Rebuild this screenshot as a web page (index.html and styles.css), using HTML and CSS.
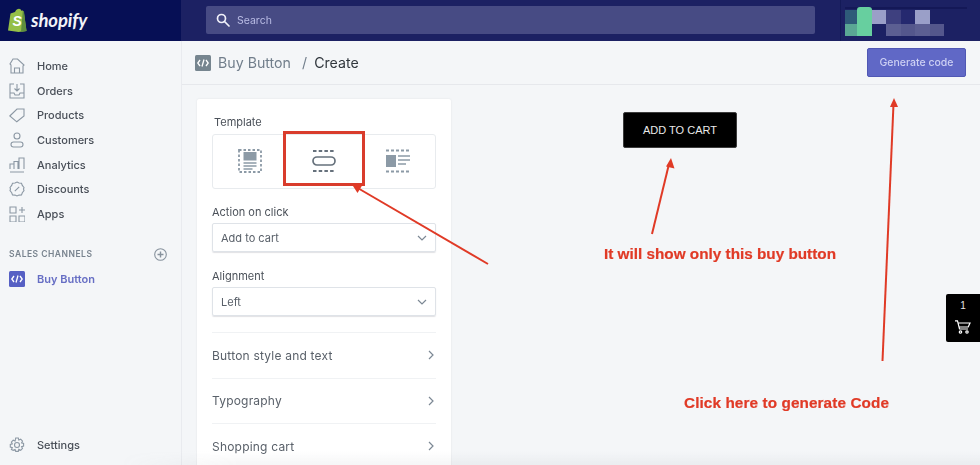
FILE: index.html
```html
<!DOCTYPE html>
<html lang="en">
<head>
    <meta charset="UTF-8">
    <title>Buy Button - Create</title>
    <link rel="stylesheet" href="styles.css">
</head>
<body>
<div class="page">
    <header class="topbar">
        <div class="brand">
            <svg class="bag" width="20" height="24" viewBox="0 0 20 24">
                <path d="M2.500 5.500 7 4C8 1.500 9.500.8 11 .8c1.200 0 2 .9 2.400 1.900l1.400-.3 1 1.500 2.700 19-8 1.100L0 22.600z" fill="#95bf47"/>
                <path d="M14.800 2.400 16 3.800l2.500 19.300-5.500 1z" fill="#5e8e3e"/>
                <text x="4.500" y="18" class="bag-s">S</text>
            </svg>
            <span class="wordmark">shopify</span>
        </div>
        <div class="topbar-mid">
            <div class="search">
                <svg width="14" height="14" viewBox="0 0 14 14" fill="none" stroke="#f0f1fa" stroke-width="1.700">
                    <circle cx="5.500" cy="5.500" r="4"/>
                    <path d="m8.500 8.500 4.500 4.500" stroke-linecap="round"/>
                </svg>
                <span>Search</span>
            </div>
        </div>
        <div class="account">
            <div class="account-line"></div>
            <div class="pixels">
                <i class="px-a"></i><i class="px-g px-tab"></i><i class="px-b"></i><i class="px-c"></i><i class="px-d"></i><i class="px-b"></i><i></i>
                <i class="px-e"></i><i class="px-g"></i><i></i><i class="px-f"></i><i class="px-h"></i><i class="px-f"></i><i class="px-h"></i>
            </div>
        </div>
    </header>

    <div class="body-row">
        <nav class="sidebar">
            <a class="nav-item">
                <svg viewBox="0 0 16 16"><path d="M2 15V7L1 6l3-5h4.500L15 7l-1 1v7zM5.500 15v-5h5v5"/></svg>
                <span>Home</span>
            </a>
            <a class="nav-item">
                <svg viewBox="0 0 16 16"><path d="M5 1H1v14h14V1h-4M1 10h4l1 2h4l1-2h4M8 1v7M5.500 5.500 8 8l2.500-2.500"/></svg>
                <span>Orders</span>
            </a>
            <a class="nav-item">
                <svg viewBox="0 0 16 16"><path d="M.8 9 8 2h7v7l-7.200 5.800zM12 5h.1"/></svg>
                <span>Products</span>
            </a>
            <a class="nav-item">
                <svg viewBox="0 0 16 16"><circle cx="8" cy="4" r="3"/><rect x="2" y="10" width="12" height="5" rx="2.500"/></svg>
                <span>Customers</span>
            </a>
            <a class="nav-item">
                <svg viewBox="0 0 16 16"><path d="M1 12V7h4v5M5 12V4.500h4V12M10 12V1h5v11M1 15h14"/></svg>
                <span>Analytics</span>
            </a>
            <a class="nav-item">
                <svg viewBox="0 0 16 16"><path d="M8 1l2 1 2.500.2.800 2.200L15 6.500 14.500 8l.5 1.700-1.700 2-.8 2.200-2.500.2L8 15l-2-.9-2.500-.2-.8-2.200L1 9.700 1.500 8 1 6.500l1.700-2.100.8-2.200L6 2zM5.800 10.200l4.400-4.400M6 6h.1M10 10h.1"/></svg>
                <span>Discounts</span>
            </a>
            <a class="nav-item">
                <svg viewBox="0 0 16 16"><path d="M1 1h6v6H1zM1 10h6v6H1zM10 10h6v6h-6zM13 1v6M10 4h6"/></svg>
                <span>Apps</span>
            </a>

            <div class="channels">
                <span>SALES CHANNELS</span>
                <svg width="13" height="13" viewBox="0 0 13 13" fill="none" stroke="#87929d" stroke-width="1.100">
                    <circle cx="6.500" cy="6.500" r="5.800"/>
                    <path d="M6.500 3.500v6M3.500 6.500h6" stroke-width="1.400"/>
                </svg>
            </div>
            <a class="nav-item nav-active">
                <svg class="code-tile" viewBox="0 0 16 16"><rect width="16" height="16" rx="1.500" fill="#5660c4" stroke="none"/><path d="M5 5 2.800 8 5 11M11 5l2.200 3-2.200 3M9 4.500 7 11.500"/></svg>
                <span>Buy Button</span>
            </a>
            <a class="nav-item nav-settings">
                <svg viewBox="0 0 16 16"><circle cx="8" cy="8" r="2.500"/><path d="m6.700 1h2.600l.5 2 1.900-.8 1.800 1.800-.9 1.800 2 .6v2.600l-2 .6.900 1.900-1.800 1.800-1.900-.9-.5 2H6.700l-.6-2-1.900.9L2.400 12.500l.9-1.900-2-.6V7.400l2-.6-.9-1.800L4.200 3.200l1.900.8z"/></svg>
                <span>Settings</span>
            </a>
        </nav>

        <main class="content">
            <div class="page-head">
                <svg class="code-tile head-tile" viewBox="0 0 16 16"><rect width="16" height="16" rx="1.500" fill="#76858f" stroke="none"/><path d="M5 5 2.800 8 5 11M11 5l2.200 3-2.200 3M9 4.500 7 11.500"/></svg>
                <span class="crumb">Buy Button</span>
                <span class="slash">/</span>
                <span class="crumb-current">Create</span>
                <button class="generate">Generate code</button>
            </div>

            <div class="workspace">
                <section class="card">
                    <div class="field-label template-label">Template</div>
                    <div class="templates">
                        <div class="tpl">
                            <svg width="24" height="24" viewBox="0 0 24 24">
                                <rect x="1" y="1" width="22" height="22" fill="none" stroke="#8c9aa6" stroke-width="1.800" stroke-dasharray="2.500 2"/>
                                <rect x="5.500" y="3" width="13" height="8.500" fill="#8c9aa6"/>
                                <path d="M5.500 14h13M5.500 17h13M5.500 20h9" stroke="#8c9aa6" stroke-width="1.400"/>
                            </svg>
                        </div>
                        <div class="tpl">
                            <svg width="24" height="24" viewBox="0 0 24 24" fill="none" stroke="#66717c">
                                <path d="M1 2h22M1 22h22" stroke-width="1.800" stroke-dasharray="3.500 2.200"/>
                                <rect x="1" y="8" width="22" height="8" rx="4" stroke-width="1.700"/>
                            </svg>
                        </div>
                        <div class="tpl">
                            <svg width="24" height="24" viewBox="0 0 24 24">
                                <path d="M0 1.500h24M0 22.500h24" stroke="#8c9aa6" stroke-width="1.800" stroke-dasharray="3 2"/>
                                <rect x="0" y="6" width="10" height="12" fill="#8c9aa6"/>
                                <path d="M12 7h12M12 11h12M12 15h8" stroke="#8c9aa6" stroke-width="1.500"/>
                            </svg>
                        </div>
                    </div>

                    <div class="field-label">Action on click</div>
                    <div class="select">
                        <span>Add to cart</span>
                        <svg class="chev" width="10" height="6" viewBox="0 0 10 6"><path d="m1 1 4 4 4-4"/></svg>
                    </div>

                    <div class="field-label">Alignment</div>
                    <div class="select">
                        <span>Left</span>
                        <svg class="chev" width="10" height="6" viewBox="0 0 10 6"><path d="m1 1 4 4 4-4"/></svg>
                    </div>

                    <div class="section-row section-first">
                        <span>Button style and text</span>
                        <svg class="chev" width="6" height="10" viewBox="0 0 6 10"><path d="m1 1 4 4-4 4"/></svg>
                    </div>
                    <div class="section-row">
                        <span>Typography</span>
                        <svg class="chev" width="6" height="10" viewBox="0 0 6 10"><path d="m1 1 4 4-4 4"/></svg>
                    </div>
                    <div class="section-row">
                        <span>Shopping cart</span>
                        <svg class="chev" width="6" height="10" viewBox="0 0 6 10"><path d="m1 1 4 4-4 4"/></svg>
                    </div>
                </section>

                <div class="preview">
                    <button class="add-to-cart">ADD TO CART</button>
                </div>
            </div>
        </main>
    </div>

    <!-- things lying over the page -->
    <div class="cart-tab">
        <span>1</span>
        <svg width="16" height="14" viewBox="0 0 16 14" fill="none" stroke="#fff" stroke-width="1.200">
            <path d="M0 .8h2.500L4.500 9h8.500M3 3h12l-1.800 4H4.200"/>
            <circle cx="5.500" cy="12" r="1.200"/>
            <circle cx="12" cy="12" r="1.200"/>
        </svg>
    </div>
    <div class="red-box"></div>
    <svg class="arrows" width="980" height="465" viewBox="0 0 980 465" fill="none" stroke="#e03a26" stroke-width="2">
        <path d="M488 264 356 187"/>
        <path d="m352 184.500 11-.5-5.500 9z" fill="#e03a26" stroke="none"/>
        <path d="M652 234 669 164"/>
        <path d="m671 158 3.500 10.500-8.500-2z" fill="#e03a26" stroke="none"/>
        <path d="M882.500 361 893.500 104"/>
        <path d="m894 98 4 9h-8z" fill="#e03a26" stroke="none"/>
    </svg>
    <div class="note note-one">It will show only this buy button</div>
    <div class="note note-two">Click here to generate Code</div>
    <div class="bottom-fade"></div>
</div>
</body>
</html>
```

FILE: styles.css
```css
* {
    box-sizing: border-box;
}

html, body {
    margin: 0;
    height: 465px;
    overflow: hidden;
}

body {
    background: #f4f6f8;
    font-family: Inter, "Noto Sans", sans-serif;
    color: #4a5059;
}

/* the reference is a soft video frame */
.page {
    position: relative;
    display: flex;
    flex-direction: column;
    height: 465px;
    overflow: hidden;
    filter: blur(0.4px);
}

/* top bar */
.topbar {
    display: flex;
    flex: none;
    height: 41px;
    background: #1c2163;
}

.brand {
    display: flex;
    align-items: center;
    gap: 3px;
    width: 181px;
    padding-left: 8px;
    background: #060f55;
}

.bag {
    margin-top: -2px;
}

.bag-s {
    font: italic 700 14px "Liberation Sans", sans-serif;
    fill: #fff;
}

.wordmark {
    font: italic 700 18.500px Lato, sans-serif;
    color: #f2f3f8;
    letter-spacing: -0.1px;
    margin-top: -1px;
}

.topbar-mid {
    width: 659px;
    padding: 6px 0 0 25px;
}

.search {
    display: flex;
    align-items: center;
    gap: 7px;
    width: 609px;
    height: 28px;
    padding-left: 10px;
    border-radius: 2px;
    background: #474b84;
    color: #b9bce4;
    font-size: 10.500px;
}

.account {
    flex: 1;
    padding: 7px 0 0 4px;
    border-left: 1px solid #141a58;
}

.account-line {
    width: 122px;
    height: 2px;
    background: #141857;
}

.pixels {
    display: grid;
    grid-template-columns: 12px repeat(6, 14.500px);
    grid-template-rows: 14px 12px;
    margin-top: 1px;
}

.px-a { background: #2e5b79; }
.px-b { background: #9a9fc8; }
.px-c { background: #3e407f; }
.px-d { background: #25296f; }
.px-e { background: #5aa794; }
.px-f { background: #5c5f92; }
.px-g { background: #67cf9f; }
.px-h { background: #54578c; }

.px-tab {
    position: relative;
}

.px-tab::before {
    content: "";
    position: absolute;
    left: 0;
    right: 0;
    top: -3px;
    height: 3px;
    border-radius: 7px 7px 0 0;
    background: #67cf9f;
}

/* sidebar */
.body-row {
    display: flex;
    flex: 1;
    min-height: 0;
}

.sidebar {
    display: flex;
    flex-direction: column;
    flex: none;
    width: 182px;
    padding-top: 13px;
    border-right: 1px solid #e9ebef;
}

.nav-item {
    display: flex;
    align-items: center;
    gap: 12px;
    height: 24.600px;
    padding-left: 9px;
    font-size: 11px;
    font-weight: 500;
    color: #494f58;
}

.nav-item svg {
    flex: none;
    width: 16px;
    height: 16px;
    fill: none;
    stroke: #8c98a4;
    stroke-width: 1.100;
}

.nav-item .code-tile,
.code-tile {
    stroke: #fff;
    stroke-width: 1.300;
    fill: none;
}

.channels {
    display: flex;
    align-items: center;
    justify-content: space-between;
    height: 16px;
    margin-top: 20px;
    padding: 0 14px 0 9px;
    font-size: 8.500px;
    font-weight: 600;
    letter-spacing: 0.500px;
    color: #78838e;
}

.nav-active {
    margin-top: 5px;
    color: #666ec4;
    font-weight: 600;
}

.nav-settings {
    margin-top: auto;
    margin-bottom: 8px;
}

/* content */
.content {
    flex: 1;
    min-width: 0;
}

.page-head {
    display: flex;
    align-items: center;
    height: 44px;
    padding: 0 14px 0 13px;
    border-bottom: 1px solid #e6e8ec;
}

.head-tile {
    width: 16px;
    height: 16px;
    margin-right: 7px;
}

.crumb {
    font-size: 14.200px;
    color: #717e8b;
}

.slash {
    margin: 0 7px 0 11px;
    font-size: 14.200px;
    color: #717e8b;
}

.crumb-current {
    font-size: 14.200px;
    color: #31373d;
}

.generate {
    margin-left: auto;
    width: 99px;
    height: 29px;
    padding: 0;
    border: 1px solid #5058b4;
    border-radius: 2px;
    background: #6068c6;
    color: #cdd0f3;
    font: 500 10.500px Inter, sans-serif;
}

.workspace {
    display: flex;
    padding: 14px 0 0 15px;
}

.card {
    flex: none;
    width: 254px;
    height: 380px;
    padding: 16px 15px 15px;
    border-radius: 2px;
    background: #fff;
    box-shadow: 0 0 2px rgba(66, 71, 90, 0.12);
}

.field-label {
    font-size: 11px;
    line-height: 14px;
    color: #4b5159;
}

.template-label {
    padding-left: 2px;
    margin-bottom: 5px;
}

.templates {
    display: flex;
    height: 55px;
    margin-bottom: 16px;
    border: 1px solid #e8ebee;
    border-radius: 3px;
}

.tpl {
    display: flex;
    flex: 1;
    align-items: center;
    justify-content: center;
    padding-bottom: 1px;
}

.select {
    display: flex;
    align-items: center;
    justify-content: space-between;
    height: 29px;
    margin: 4px 0 17px;
    padding: 0 8px;
    border: 1px solid #dfe3e8;
    border-radius: 2px;
    box-shadow: 0 1px 1px rgba(66, 71, 90, 0.16);
    font-size: 11px;
    color: #596069;
}

.chev {
    fill: none;
    stroke: #7c8894;
    stroke-width: 1.200;
}

.section-row {
    display: flex;
    align-items: center;
    justify-content: space-between;
    height: 45.500px;
    padding-right: 2px;
    border-top: 1px solid #f0f2f4;
    font-size: 12px;
    letter-spacing: 0.200px;
    color: #5a616a;
}

.section-first {
    margin-top: -1px;
}

.preview {
    padding: 13px 0 0 172px;
}

.add-to-cart {
    display: block;
    width: 114px;
    height: 36px;
    border: 1px solid #3c3c3c;
    border-radius: 2px;
    background: #000;
    color: #eaeaea;
    font: 11px "Liberation Sans", sans-serif;
}

/* overlays */
.cart-tab {
    position: absolute;
    top: 294px;
    right: 0;
    display: flex;
    flex-direction: column;
    align-items: center;
    width: 34px;
    height: 48px;
    padding-top: 5px;
    gap: 7px;
    border-radius: 2px 0 0 2px;
    background: #000;
    color: #e8e8e8;
    font: 10px/14px "Liberation Sans", sans-serif;
}

.red-box {
    position: absolute;
    left: 283px;
    top: 131px;
    width: 82px;
    height: 55px;
    border: 3px solid #d93c2c;
}

.arrows {
    position: absolute;
    left: 0;
    top: 0;
}

.note {
    position: absolute;
    font: 700 15.300px/18px "Liberation Sans", sans-serif;
    color: #e03a26;
    white-space: nowrap;
    -webkit-text-stroke: 0.2px #e03a26;
}

.note-one {
    left: 604px;
    top: 245px;
}

.note-two {
    left: 684px;
    top: 394px;
    letter-spacing: 0.1px;
}

.bottom-fade {
    position: absolute;
    left: 120px;
    right: 0;
    bottom: 0;
    height: 14px;
    background: linear-gradient(rgba(120, 125, 135, 0), rgba(120, 125, 135, 0.07));
    -webkit-mask-image: linear-gradient(to right, transparent, #000 120px);
    mask-image: linear-gradient(to right, transparent, #000 120px);
}
```
